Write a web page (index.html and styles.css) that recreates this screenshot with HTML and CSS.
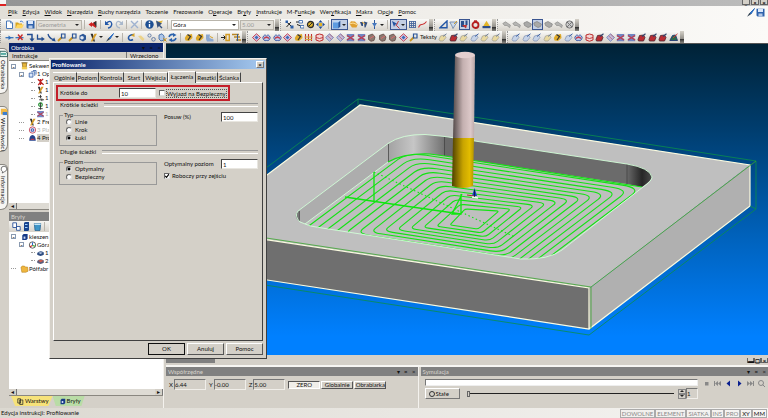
FILE: index.html
```html
<!DOCTYPE html>
<html lang="pl">
<head>
    <meta charset="UTF-8">
    <meta name="viewport" content="width=device-width, initial-scale=1.0">
    <title>Profilowanie</title>
    <link rel="stylesheet" href="styles.css">
</head>
<body>
    <!-- icon sprite -->
    <svg class="sprite" aria-hidden="true">
        <symbol id="i-new" viewBox="0 0 9 9"><path d="M1.5 1H5.5L7.5 3V8.5H1.5Z" fill="#fff" stroke="#4a78b8"/><path d="M5.5 1V3H7.5" fill="none" stroke="#4a78b8" stroke-width=".7"/></symbol>
        <symbol id="i-open" viewBox="0 0 9 9"><path d="M.5 2.5H3L4 3.5H7V8H.5Z" fill="#d9a520"/><path d="M2.2 4.5H9L7 8.2H.5Z" fill="#ffd65c"/><path d="M5 1.5Q7 0 8 2.5" fill="none" stroke="#26c" stroke-width=".8"/></symbol>
        <symbol id="i-save" viewBox="0 0 9 9"><path d="M.5.8H8.5V8.5H1.5L.5 7.5Z" fill="#2e62ac"/><path d="M2 1H7V4H2Z" fill="#dce8fa"/><path d="M2.5 5.5H6.5V8.5H2.5Z" fill="#b4c8e6"/></symbol>
        <symbol id="i-pick" viewBox="0 0 9 9"><path d="M.5 4.5L4 2V3.5L8 1V8L4 5.5V7Z" fill="#c22"/><path d="M5.5 2.5L8.5 1V7.5Z" fill="#333"/></symbol>
        <symbol id="i-undo" viewBox="0 0 9 9"><path d="M2 3.5Q7-1 7.8 4Q7.5 7.5 4 8" fill="none" stroke="#2458a8" stroke-width="1.4"/><path d="M1 .8V5H5.2Z" fill="#2458a8"/></symbol>
        <symbol id="i-redo" viewBox="0 0 9 9"><path d="M7 3.5Q2-1 1.2 4Q1.5 7.5 5 8" fill="none" stroke="#a9b8cc" stroke-width="1.3"/><path d="M8 .8V5H3.8Z" fill="#a9b8cc"/></symbol>
        <symbol id="i-del" viewBox="0 0 9 9"><path d="M1 1L8 8M8 1L1 8" stroke="#9fb2d0" stroke-width="1.4"/></symbol>
        <symbol id="i-info" viewBox="0 0 9 9"><circle cx="4.5" cy="4.5" r="4.2" fill="#1d4f93"/><path d="M4.5 4V7.3M4.5 1.6V3" stroke="#fff" stroke-width="1.4"/></symbol>
        <symbol id="i-help" viewBox="0 0 9 9"><path d="M1 2L8 .5L5 5L4 4Z" fill="#e2b83a"/><path d="M1 .5L2.5 8L4 6L6.5 8.5L7.5 7.5L5 5L7 3.5Z" fill="#36527e"/></symbol>
        <symbol id="i-nodes" viewBox="0 0 9 9"><path d="M1 1.5L4 4L7.5 7.5M1.5 7L6 2" stroke="#222" stroke-width="1"/><path d="M.5.5H3V3H.5ZM5.5 5.5H8.5V8.5H5.5Z" fill="#2d5fa8"/></symbol>
        <symbol id="i-steps" viewBox="0 0 9 9"><path d="M1 2H5M2 4.5L6 6" stroke="#222"/><path d="M4 .5H7.5V3H4ZM5.5 5.5H9V8H5.5Z" fill="#fff" stroke="#2d5fa8" stroke-width=".8"/></symbol>
        <symbol id="i-turn" viewBox="0 0 9 9"><circle cx="4.5" cy="4.5" r="3" fill="#e2b52b" stroke="#2b2b2b" stroke-width="1.3"/><path d="M3 6L6.5 2.5" stroke="#2b2b2b"/></symbol>
        <symbol id="i-move" viewBox="0 0 9 9"><path d="M4.5 0L6.5 2.5H2.5ZM4.5 9L2.5 6.5H6.5ZM0 4.5L2.5 2.5V6.5ZM9 4.5L6.5 6.5V2.5Z" fill="#234d92"/><path d="M3 3H6V6H3Z" fill="#e3b326"/></symbol>
        <symbol id="i-cube" viewBox="0 0 9 9"><path d="M1 2.5L3 .7H8.3L6.3 2.5Z" fill="#b8d6f8"/><path d="M1 2.5H6.3V8.5H1Z" fill="#5d9be0"/><path d="M6.3 2.5L8.3.7V6.5L6.3 8.5Z" fill="#1c4f9a"/></symbol>
        <symbol id="i-disc" viewBox="0 0 9 9"><path d="M.5 4L2 1.2L6 1.5L8.7 4.5L7.5 7.5L3 7.5Z" fill="#e0a030"/><path d="M1 3.8L4 3L8 4.5" stroke="#ffe09a" fill="none"/></symbol>
        <symbol id="i-pair" viewBox="0 0 9 9"><path d="M1 2H4V6H2.5ZM5 1.5L8.5 2.5L6.5 7.5H5.5Z" fill="#37507e"/><path d="M3 2L6 4" stroke="#d29a2c"/></symbol>
        <symbol id="i-pin" viewBox="0 0 9 9"><path d="M4.5 0V9" stroke="#2e5a9d"/><path d="M2 3H7L4.5 7Z" fill="#4577bd"/></symbol>
        <symbol id="i-snap" viewBox="0 0 9 9"><path d="M1 1L6.5 4L4 4.8L3 7Z" fill="#2354a0"/><path d="M5.5 5.5L8.5 8.5M7.5 1L5 6" stroke="#c23b3b"/></symbol>
        <symbol id="i-grid" viewBox="0 0 9 9"><path d="M1.5 1V8M3.5 1V8M5.5 1V8M7.5 1V8M1 1.5H8M1 3.5H8M1 5.5H8M1 7.5H8" stroke="#4a6a9e" stroke-width=".9"/></symbol>
        <symbol id="i-curve" viewBox="0 0 9 9"><path d="M.5 7.5C3 1 4 8 8.5 1.5" fill="none" stroke="#c33" stroke-width="1.1"/></symbol>
        <symbol id="i-angle" viewBox="0 0 9 9"><path d="M1 7.8H8V1Z" fill="none" stroke="#2357a6" stroke-width="1.4"/></symbol>
        <symbol id="i-cup" viewBox="0 0 9 9"><path d="M.8 2H8.2L5.5 6L4 8.5L3 6Z" fill="#cfdcec" stroke="#6780a5" stroke-width=".8"/><path d="M5 4L8 1" stroke="#d0a12b"/></symbol>
        <symbol id="i-mill" viewBox="0 0 9 9"><path d="M1 1H4V7H1ZM5.5.5H7.5V5H5.5Z" fill="#2a4f8d"/><path d="M2 5H7L6 8.5Z" fill="#bd3131"/></symbol>
        <symbol id="i-ring" viewBox="0 0 9 9"><circle cx="4.5" cy="5" r="3" fill="none" stroke="#b51f1f" stroke-width="1.8"/><path d="M3 .3H6V2H3Z" fill="#b51f1f"/></symbol>
        <symbol id="i-bell" viewBox="0 0 9 9"><path d="M1 6.5L4.5.8L8 6.5Z" fill="#e3b526"/><path d="M.5 6H8.5V8.2H.5Z" fill="#2d4d88"/></symbol>
        <symbol id="i-gray" viewBox="0 0 9 9"><path d="M.8 3L4 1.5L8.4 4L7.5 6.5L5 7.5L1.5 5.5Z" fill="#a9a9a7" stroke="#838381" stroke-width=".7"/></symbol>
        <symbol id="i-grayarm" viewBox="0 0 9 9"><path d="M.8 3.5L3.5 1.8L8.4 5.2L7.6 7.6L5 5.5L2.5 5.5Z" fill="#b5b5b3" stroke="#858583" stroke-width=".6"/></symbol>
        <symbol id="i-grayx" viewBox="0 0 9 9"><circle cx="4.5" cy="4.5" r="3.6" fill="#ccc" stroke="#777"/><path d="M2 2L7 7M7 2L2 7" stroke="#777"/></symbol>

        <symbol id="i-line" viewBox="0 0 9 9"><path d="M.5 4.7H8.5" stroke="#2a6ab8" stroke-width="1.2"/><path d="M3.5 2.5L6.5 4.7L3.5 7Z" fill="#2a6ab8"/></symbol>
        <symbol id="i-linex" viewBox="0 0 9 9"><path d="M.5 4.7H8.5" stroke="#2a6ab8" stroke-width="1.2"/><path d="M3 1.5L7.5 7M7.5 1.5L3 7" stroke="#c62828" stroke-width="1.3"/></symbol>
        <symbol id="i-down" viewBox="0 0 9 9"><path d="M1 1.5H6V6" fill="none" stroke="#234e92" stroke-width="1.5"/><path d="M3.5 5.5H8.5L6 8.8Z" fill="#234e92"/></symbol>
        <symbol id="i-right" viewBox="0 0 9 9"><path d="M1.5 1.5V6H6" fill="none" stroke="#234e92" stroke-width="1.3"/><path d="M5.5 3.8V8.2L8.8 6Z" fill="#234e92"/></symbol>
        <symbol id="i-diag" viewBox="0 0 9 9"><path d="M1 1Q2 5 6 6.5" fill="none" stroke="#234e92" stroke-width="1.3"/><path d="M8.6 8.4L4.6 7.6L7.3 4.6Z" fill="#234e92"/></symbol>
        <symbol id="i-key" viewBox="0 0 9 9"><path d="M1 8L5 4" stroke="#c99522" stroke-width="1.8"/><path d="M4.5 1H8V5H4.5Z" fill="none" stroke="#2a5598" stroke-width="1.2"/></symbol>
        <symbol id="i-gear" viewBox="0 0 9 9"><path d="M1.5 2.5L5 .8L8 2.5V6.5L5 8.5L1.5 6.5Z" fill="#2d5797"/><circle cx="4" cy="4.8" r="1.8" fill="#dfe7f2"/></symbol>
        <symbol id="i-drill" viewBox="0 0 9 9"><path d="M1.5.8H3.8L6 8.5H4.5Z" fill="#303030"/><path d="M5.5.8H8L3.5 8.5H1.8Z" fill="#d69d28"/></symbol>
        <symbol id="i-brush" viewBox="0 0 9 9"><path d="M8.5.5L4 5L5 6Z" fill="#2c6dc0" stroke="#2c6dc0"/><path d="M1 8.8L3.5 4.8L5 6.2Z" fill="#345"/></symbol>
        <symbol id="i-hook" viewBox="0 0 9 9"><path d="M7.5 1.5Q2 2 2.5 5.5Q3.5 8.5 7 6.5" fill="none" stroke="#2458a5" stroke-width="1.6"/><path d="M5 2.5L8.5 0V4Z" fill="#d6a32a"/></symbol>
        <symbol id="i-soft" viewBox="0 0 9 9"><path d="M1 3L4 2.5L7.5 6L6 8L4 6.5Z" fill="#ecd389"/></symbol>
        <symbol id="i-dots" viewBox="0 0 9 9"><circle cx="2.5" cy="2.5" r="1.6" fill="none" stroke="#667fa8"/><circle cx="6.5" cy="6.3" r="1.8" fill="none" stroke="#667fa8"/></symbol>
        <symbol id="i-hex" viewBox="0 0 9 9"><path d="M1 2L4 .8L6 3V7L3 8L1 6Z" fill="#aec6e8" stroke="#36639f" stroke-width=".8"/><path d="M5 5L8.5 8.5M8.5 5L5.5 8.5" stroke="#c99420"/></symbol>
        <symbol id="i-swap" viewBox="0 0 9 9"><path d="M1 4Q2 .8 5.5 1.5M8 5Q7 8.2 3.5 7.5" fill="none" stroke="#2b63ad" stroke-width="1.5"/><path d="M5 0L8.5 2L5 4ZM4 5L.5 7L4 9Z" fill="#2b63ad"/></symbol>
        <symbol id="i-gold" viewBox="0 0 9 9"><path d="M.8 5L2.5 2L8 1L8.5 5L5 8L1.5 7.5Z" fill="#dfaa29"/><path d="M3.5 1.5L6.5 3.5L4 7" fill="none" stroke="#333" stroke-width="1.2"/></symbol>
        <symbol id="i-part" viewBox="0 0 9 9"><path d="M1 1.5H5L4.5 5L8.5 6.5V8.5H2L1 6Z" fill="#8ba7ce"/><path d="M5 3.5L8 5" stroke="#d4a12c"/></symbol>
        <symbol id="i-in" viewBox="0 0 9 9"><path d="M0 4.5H4M2.5 2.5L4.5 4.5L2.5 6.5" fill="none" stroke="#222"/><path d="M5 1.5H8.3V7.5H5Z" fill="none" stroke="#d39c25" stroke-width="1.4"/></symbol>
        <symbol id="i-list" viewBox="0 0 9 9"><path d="M0 1.5H7M2 4H8M4 7H9" stroke="#b98724" stroke-width="1.6"/><path d="M5.5 1V8" stroke="#345c98"/></symbol>
        <symbol id="i-coil" viewBox="0 0 9 9"><path d="M.5 4.5L4.5.8L8.5 4.5L4.5 8.2Z" fill="#d8d4f0" stroke="#c23a4c" stroke-width="1"/><path d="M2.5 4.5L4.5 2.6L6.5 4.5L4.5 6.4Z" fill="#4168b4"/></symbol>
        <symbol id="i-weave" viewBox="0 0 9 9"><path d="M.8 1H8.2V3.5L6 4.5L8.2 6V8.2H.8V6L3 4.5L.8 3.5Z" fill="#7186c2"/><path d="M1 2.5L8 7M8 2.5L1 7" stroke="#c23a4c" stroke-width="1.1"/></symbol>
        <symbol id="i-wave" viewBox="0 0 9 9"><path d="M.8 4.5Q2.5.5 4.5 3Q6.5.5 8.2 4.5Q7.5 8.3 4.5 7.5Q1.5 8.3.8 4.5Z" fill="#bcc8e8" stroke="#3453a0" stroke-width=".9"/><path d="M2 5.5Q4.5 3 7 5.5" fill="none" stroke="#c23a4c" stroke-width="1.2"/></symbol>
        <symbol id="i-pot" viewBox="0 0 9 9"><path d="M1 2Q4.5 0 8 2V7Q4.5 9.5 1 7Z" fill="#f1d5d5" stroke="#bd2e2e"/><path d="M1 4.5Q4.5 6.5 8 4.5" fill="none" stroke="#bd2e2e" stroke-width=".9"/></symbol>
        <symbol id="i-peg" viewBox="0 0 9 9"><path d="M1.5 1V8M4.5 1V8M7.5 1V8" stroke="#c23333" stroke-width="1.1"/><path d="M.5 4H8.5M1 6.5H8" stroke="#d7a53a" stroke-width="1"/></symbol>
        <symbol id="i-tile" viewBox="0 0 9 9"><path d="M4.5.8L8.5 4.5L4.5 8.3L.6 4.5Z" fill="#c2bcda" stroke="#667fbd" stroke-width=".8"/><path d="M2.5 2.7L6.5 6.5M4.5 1L8 4.5" stroke="#bf5f70" stroke-width=".7"/></symbol>
        <symbol id="i-knob" viewBox="0 0 9 9"><path d="M1.5 2.5L5.5 1L8 4L7 7.5L4 8.3L1.5 6.5Z" fill="#8c7a72" stroke="#563f3b" stroke-width=".7"/><path d="M3 5.5L7 3" stroke="#d96b6b"/></symbol>
        <symbol id="i-slab" viewBox="0 0 9 9"><path d="M1 6.5L2.5 3L6.5 2L8 4.5L5 8H2Z" fill="#c6d3e8" stroke="#8091b2" stroke-width=".7"/><path d="M5 3.5L8.5.8" stroke="#3b60a4" stroke-width="1"/></symbol>
        <symbol id="i-slaby" viewBox="0 0 9 9"><path d="M1 6.5L2.5 3L6.5 2L8 4.5L5 8H2Z" fill="#e9d9a0" stroke="#a29f93" stroke-width=".7"/><path d="M5 3.5L8.5.8" stroke="#6f7f98" stroke-width="1"/></symbol>
        <symbol id="i-slabr" viewBox="0 0 9 9"><path d="M1 6.5L2.5 2.5L6.5 2L8 4.5L6.5 8H1.5Z" fill="#bb2c33" stroke="#4c2730" stroke-width=".8"/><path d="M5 3.5L8.5.8" stroke="#30456e" stroke-width="1.1"/></symbol>
        <symbol id="i-slabg" viewBox="0 0 9 9"><path d="M.8 7.5L3.5 2.5L6.5 2L8.5 7.5Z" fill="#2b6a4a" stroke="#223a74" stroke-width=".9"/><path d="M4 5L8.5.8" stroke="#c33" stroke-width="1"/></symbol>

        <symbol id="i-scroll" viewBox="0 0 9 9"><path d="M1 .8H8M2 1H7L6.5 6H2.5Z" fill="#e6b63a" stroke="#7a5a14" stroke-width=".7"/><path d="M1.5 5.5H7.5V8.3H1.5Z" fill="#f2cc52"/></symbol>
        <symbol id="i-ops" viewBox="0 0 9 9"><path d="M.8 3.5H5V8H.8Z" fill="#dce8fa" stroke="#2e5aa6" stroke-width=".9"/><path d="M3 2H7V6.5" fill="none" stroke="#2e5aa6" stroke-width=".9"/><path d="M5 .6H8.5V5" fill="none" stroke="#2e5aa6" stroke-width=".9"/></symbol>
        <symbol id="i-redtool" viewBox="0 0 9 9"><path d="M1.5 1.5L4.5 4L7.5 1M2 8L4.5 4.5L8 7.5M4.5 1V8" stroke="#bb1f1f" stroke-width="1.4" fill="none"/></symbol>
        <symbol id="i-clamp" viewBox="0 0 9 9"><path d="M2 3H6M4.5 1V5M6 5V8M3 6.5H8.5" stroke="#333" stroke-width="1"/></symbol>
        <symbol id="i-spin" viewBox="0 0 9 9"><circle cx="4.5" cy="3" r="2" fill="none" stroke="#1e8a2c" stroke-width="1.3"/><path d="M4.5 1V8.5M2 7.5H7" stroke="#333"/></symbol>
        <symbol id="i-target" viewBox="0 0 9 9"><circle cx="4.5" cy="4.5" r="3.6" fill="#f4e9f2" stroke="#c6485e"/><circle cx="4.5" cy="4.5" r="1.5" fill="none" stroke="#3d5fb4" stroke-width="1.2"/></symbol>
        <symbol id="i-prof" viewBox="0 0 9 9"><path d="M.8 7.5Q1 1.5 4.5 1.2Q8 1.5 8.2 7.5Z" fill="#25428c"/><path d="M2.5 6H6.5" stroke="#c23a4c" stroke-width="1.3"/></symbol>
        <symbol id="i-solid" viewBox="0 0 9 9"><path d="M2 2.5L3.5 1H8V6.5L6.5 8H2Z" fill="#173a88"/><path d="M3.5 4H5.5V6.5H3.5Z" fill="#cdd9f2"/></symbol>
        <symbol id="i-plane" viewBox="0 0 9 9"><circle cx="4.5" cy="4.5" r="3.6" fill="#fff" stroke="#555"/><path d="M4.5 5V1.5" stroke="#26c" stroke-width="1.2"/><path d="M4.5 5L1.5 6.5" stroke="#c22" stroke-width="1.4"/><path d="M4.5 5L7.5 6" stroke="#2a2" stroke-width="1.2"/></symbol>
        <symbol id="i-body" viewBox="0 0 9 9"><path d="M.8 4.5Q4 1 8.2 4V6.5Q4.5 9 .8 6.5Z" fill="#2e4c80"/><path d="M2 4.3Q4.5 3 7 4.3L4.5 5.5Z" fill="#c0d0e8"/></symbol>
        <symbol id="i-bodyr" viewBox="0 0 9 9"><path d="M.8 4.5Q4 1 8.2 4V6.5Q4.5 9 .8 6.5Z" fill="#5a5e7c"/><path d="M2 4.3Q4.5 2.4 8 4.3L4.5 5.8Z" fill="#d45a4a"/></symbol>
        <symbol id="i-folder" viewBox="0 0 9 9"><path d="M.5 2.5L2 1.2H4.5L5.5 2.3H8L8.5 7L6 8.2H1.5Z" fill="#efb63e" stroke="#b27c1c" stroke-width=".6"/></symbol>
        <symbol id="i-copy" viewBox="0 0 9 9"><path d="M.8.8H4.5V5.5H.8ZM4.5 4.5H8.2V8.3H4.5Z" fill="#fff" stroke="#2e549a" stroke-width=".9"/></symbol>
        <symbol id="i-cab" viewBox="0 0 9 9"><path d="M2 .8L3.5 0H7V8.2L6 9H2Z" fill="#16428e"/><path d="M3 2.5H5.5M3 5.5H5.5" stroke="#9fd0ff"/></symbol>
        <symbol id="i-bin" viewBox="0 0 9 9"><path d="M1.3 1.5H7.7L7 8.5H2Z" fill="#3f96c8" stroke="#205c8c" stroke-width=".7"/><path d="M1.3 1.5H7.7V3H1.3Z" fill="#c4e6f8"/></symbol>
        <symbol id="i-layers" viewBox="0 0 9 9"><path d="M1 1H4.5V6.5H1ZM3.5 2.5H7.5V8.3H3.5Z" fill="#e8d87a" stroke="#222" stroke-width=".9"/></symbol>
        <symbol id="i-bubble" viewBox="0 0 9 9"><path d="M4.5.8A3.2 3.2 0 0 1 7.7 4Q7.7 6 5 7L2.5 8.5L3 6.8Q1.3 6 1.3 4A3.2 3.2 0 0 1 4.5.8Z" fill="#fff" stroke="#444" stroke-width=".8"/></symbol>
        <symbol id="i-machine" viewBox="0 0 9 9"><path d="M0 2H6L8.5 4V8H0Z" fill="#e3f4ee" stroke="#1f5652"/><path d="M1 5H7" stroke="#2a948a" stroke-width="1.6"/></symbol>
        <symbol id="i-card" viewBox="0 0 9 9"><path d="M1 1.5H7L8.5 4V8H1Z" fill="#f2b944"/><path d="M3 5H8V8.5H3Z" fill="#3b7ed0"/></symbol>
    </svg>

    <header class="titlebar">
        <span class="logo"></span>
        <div class="winbtns">
            <button aria-label="Minimalizuj">_</button>
            <button aria-label="Przywróć">▫</button>
            <button aria-label="Zamknij">×</button>
        </div>
    </header>

    <nav class="menubar">
        <a href="#"><u>P</u>lik</a>
        <a href="#"><u>E</u>dycja</a>
        <a href="#"><u>W</u>idok</a>
        <a href="#"><u>N</u>arzędzia</a>
        <a href="#"><u>R</u>uchy narzędzia</a>
        <a href="#">Toczenie</a>
        <a href="#">Frezowanie</a>
        <a href="#">O<u>p</u>eracje</a>
        <a href="#">Br<u>y</u>ły</a>
        <a href="#"><u>I</u>nstrukcje</a>
        <a href="#">M-F<u>u</u>nkcje</a>
        <a href="#">Wer<u>y</u>fikacja</a>
        <a href="#"><u>M</u>akra</a>
        <a href="#">Op<u>c</u>je</a>
        <a href="#"><u>P</u>omoc</a>
        <span class="menu-right tools" data-icons="brush save"></span>
    </nav>

    <div class="toolbar-row">
        <div class="toolbar">
            <span class="tools" data-icons="new open save"></span>
            <select class="combo combo-geo" aria-label="Geometria" disabled><option>Geometria</option></select>
            <span class="tools" data-icons="| pick | undo redo | del | info help |"></span>
            <select class="combo combo-plane" aria-label="Płaszczyzna"><option>Góra</option></select>
            <select class="combo combo-z" aria-label="Poziom" disabled><option>5.00</option></select>
        </div>
        <div class="toolbar">
            <span class="tools" data-icons="nodes steps turn move | cube*v disc pair pin v | snap*v grid curve"></span>
        </div>
        <div class="toolbar">
            <span class="tools" data-icons="angle cup mill* ring bell"></span>
        </div>
        <div class="toolbar">
            <span class="tools" data-icons="grayarm grayarm gray gray* gray grayarm grayx"></span>
        </div>
    </div>

    <div class="toolbar-row">
        <div class="toolbar">
            <span class="tools" data-icons="line linex down right diag key key gear drill v brush v | hook soft dots hex swap | gold gold part | in list"></span>
        </div>
        <div class="toolbar">
            <span class="tools" data-icons="coil wave wave coil gold peg pot tile tile weave weave knob knob knob coil key"></span>
            <button class="textbtn">Teksty</button>
            <span class="tools" data-icons="slaby slabr slaby slab slaby slaby"></span>
        </div>
        <div class="toolbar">
            <span class="tools" data-icons="slab slab slab slaby gold slab wave pot slabr tile weave weave slabr slabr slabr slabg"></span>
        </div>
    </div>

    <main class="work">
        <aside class="rail">
            <button><svg><use href="#i-machine"/></svg><span>Obrabiarka</span></button>
            <button><svg><use href="#i-card"/></svg><span>Właściwości</span></button>
            <button><svg><use href="#i-bubble"/></svg><span>Informacje</span></button>
        </aside>

        <section class="side">
            <div class="pane-head active"><span>Obróbka</span><span class="marks">▾ ¤ ×</span></div>
            <div class="cols"><span>Instrukcje</span><span>Wrzeciono</span></div>
            <ul class="tree tree-ops">
                <li><b class="box">-</b><svg><use href="#i-scroll"/></svg>Sekwen</li>
                <li class="l1"><b class="box">-</b><svg><use href="#i-ops"/></svg>1 Op</li>
                <li class="l2"><svg><use href="#i-redtool"/></svg>1</li>
                <li class="l2"><svg><use href="#i-drill"/></svg>1</li>
                <li class="l2"><svg><use href="#i-clamp"/></svg>1</li>
                <li class="l2"><svg><use href="#i-spin"/></svg>1</li>
                <li class="l2 off"><svg><use href="#i-weave"/></svg>1</li>
                <li class="l1"><i class="stub"></i><svg><use href="#i-drill"/></svg>2 Fre</li>
                <li class="l1 off"><i class="stub"></i><svg><use href="#i-target"/></svg>3 Pla</li>
                <li class="l1"><i class="stub"></i><svg><use href="#i-prof"/></svg><span class="sel">4 Pro</span></li>
            </ul>
            <div class="hscroll"><button aria-label="W lewo">◂</button><button aria-label="W prawo">▸</button></div>
            <div class="pane-head gap"><span>Bryły</span></div>
            <div class="mini tools" data-icons="copy cab bin |"></div>
            <ul class="tree tree-solids">
                <li><b class="box">-</b><svg><use href="#i-solid"/></svg>kieszen</li>
                <li class="l1"><b class="box">-</b><svg><use href="#i-plane"/></svg>Góra</li>
                <li class="l2"><svg><use href="#i-body"/></svg>1</li>
                <li class="l2"><svg><use href="#i-bodyr"/></svg>2</li>
                <li><i class="stub"></i><svg><use href="#i-folder"/></svg>Półfabr</li>
            </ul>
            <div class="hscroll"><button aria-label="W lewo">◂</button><button aria-label="W prawo">▸</button></div>
            <div class="side-tabs">
                <button class="yellow"><svg><use href="#i-layers"/></svg>Warstwy</button>
                <button class="green"><svg><use href="#i-solid"/></svg>Bryły</button>
            </div>
        </section>

        <section class="stage">
            <div class="view">
                <svg viewBox="166 44 602 311" preserveAspectRatio="xMinYMin slice">
                    <defs>
                        <linearGradient id="bend"><stop offset="0" stop-color="#a2a2a2"/><stop offset=".45" stop-color="#c6c6c6"/><stop offset="1" stop-color="#707070"/></linearGradient>
                        <linearGradient id="bendR"><stop offset="0" stop-color="#6a6a6a"/><stop offset=".6" stop-color="#262626"/><stop offset="1" stop-color="#4a4a4a"/></linearGradient>
                        <linearGradient id="shank"><stop offset="0" stop-color="#544a4a"/><stop offset=".45" stop-color="#c4b0b0"/><stop offset=".8" stop-color="#dcc8c8"/><stop offset="1" stop-color="#b8a6a6"/></linearGradient>
                        <linearGradient id="flute"><stop offset="0" stop-color="#4e4000"/><stop offset=".5" stop-color="#c8a400"/><stop offset=".8" stop-color="#e2bc00"/><stop offset="1" stop-color="#b49400"/></linearGradient>
                        <clipPath id="floor"><path d="M305 224L388 162Q404 153 430 154L445 156L627 184L643 187L562 250Q549 260 521 259L322 228Q311 227 305 224Z"/></clipPath>
                    </defs>
                    <!-- block -->
                    <path d="M195 229L360 105L750 165L590 288Z" fill="#bfbfbf"/>
                    <path d="M195 229L590 288V329L195 269Z" fill="#6f6f6f"/>
                    <path d="M590 288L750 165V206L589 329Z" fill="#b0b0b0"/>
                    <path d="M195 229L360 105L750 165V206L589 329L195 269M195 229L589 288V329" fill="none" stroke="#fcfce0" stroke-width="1.2"/>
                    <path d="M266 168L358 99L756 161V209L589 335L200 275M358 99V105M750 206L756 209" fill="none" stroke="#0a8f4a" stroke-width=".8"/>
                    <path d="M200 228L591 287L756 161M591 287V329" fill="none" stroke="#3aa52e" stroke-width=".8"/>
                    <!-- pocket walls -->
                    <path d="M298 211L388 143.5V162L305 224Q295 220 296 214Z" fill="#adadad"/>
                    <path d="M296 214L299 210V221Q295 218 296 214Z" fill="#777"/>
                    <path d="M388 143.5Q402 134 425 134.5L445 136.5V156L430 154Q404 153 388 162Z" fill="url(#bend)"/>
                    <path d="M445 136.5L627 164V184L445 156Z" fill="#6b6b6b"/>
                    <path d="M627 164Q650 168 652 177Q652 180 642 187L627 184Z" fill="url(#bendR)"/>
                    <path d="M388.5 144V162M444.5 137V156M627 164V184M299.5 211V221" stroke="#3c3c3c" stroke-width=".7"/>
                    <!-- tool passes, filled by script.js -->
                    <g clip-path="url(#floor)"><path id="passes" fill="none" stroke="#14e214" stroke-width="1.1"/></g>
                    <path d="M388 162Q404 153 430 154L445 156L642 187" fill="none" stroke="#14e214" stroke-width="1.2"/>
                    <path d="M627 164L445 136.5L425 134.5Q402 134 388 143.5L298 211Q294 216 300 222Q310 227 322 228L521 259Q549 260 562 250L643 187Q652 181 652 177Q650 168 627 164ZM305 224L388 162" fill="none" stroke="#d2ffd8" stroke-width=".9"/>
                    <path d="M374 202V172M345 197L405 206L461 214M461 194V214H452L462 194" fill="none" stroke="#0fe60f" stroke-width="1.3"/>
                    <path d="M374 172L515 237" stroke="#0fe60f" stroke-width="1.1" stroke-dasharray="1.5 2.5"/>
                    <!-- cutter -->
                    <path d="M455 55H475L474 139H453Z" fill="url(#shank)"/>
                    <path d="M453 138H474L473 186Q463 190 452 186Z" fill="url(#flute)"/>
                    <ellipse cx="465" cy="55" rx="10" ry="3.2" fill="#e3cfcf"/>
                    <path d="M474.5 188L477 196H472Z" fill="#1238c8"/>
                    <path d="M467 195L474 196" stroke="#a33"/>
                    <path d="M472 197L478 198" stroke="#e9fff0" stroke-width="1.5"/>
                    <path d="M474.5 190V197" stroke="#111" stroke-width=".7"/>
                </svg>
            </div>
            <div class="strip"><span class="strip-tab"></span><div class="winbtns"><button aria-label="Minimalizuj">▬</button><button aria-label="Maksymalizuj">◻</button><button aria-label="Zamknij">×</button></div></div>
            <div class="docks">
                <div class="dock dock-coords">
                    <div class="pane-head"><span>Współrzędne</span><span class="marks">▾ ¤ ×</span></div>
                    <div class="coords">
                        <label>X<input type="text" value="6.44"></label>
                        <label>Y<input type="text" value="-0.00"></label>
                        <label>Z<input type="text" value="5.00"></label>
                        <div class="coord-btns">
                            <button class="pressed">ZERO</button>
                            <button>Globalnie</button>
                            <button>Obrabiarka</button>
                        </div>
                    </div>
                </div>
                <div class="dock dock-sim">
                    <div class="pane-head"><span>Symulacja</span><span class="marks">▾ ¤ ×</span></div>
                    <div class="sim">
                        <div class="sim-main">
                            <div class="progress"></div>
                            <div class="sim-speed">
                                <button class="stale"><i></i>Stałe</button>
                                <input type="range" min="0" max="100" value="0" aria-label="Prędkość">
                                <span class="spin"><button aria-label="Więcej"><i class="up"></i></button><button aria-label="Mniej"><i class="drop"></i></button></span>
                                <input type="text" class="num" value="1" aria-label="Krok">
                            </div>
                        </div>
                        <div class="transport">
                            <button class="dim" aria-label="Stop"><svg viewBox="0 0 9 9"><path d="M3 3H6.5V6.5H3Z"/></svg></button>
                            <button class="dim" aria-label="Początek"><svg viewBox="0 0 9 9"><path d="M1 2H2V7H1ZM5 2V7L2 4.5ZM8 2V7L5 4.5Z"/></svg></button>
                            <button aria-label="Wstecz"><svg viewBox="0 0 9 9"><path d="M6 1.5V7.5L2.5 4.5Z"/></svg></button>
                            <button aria-label="Odtwórz"><svg viewBox="0 0 9 9"><path d="M3 1.5V7.5L6.5 4.5Z"/></svg></button>
                            <button class="dim" aria-label="Koniec"><svg viewBox="0 0 9 9"><path d="M8 2H7V7H8ZM4 2V7L7 4.5ZM1 2V7L4 4.5Z"/></svg></button>
                            <button class="dim" aria-label="Lupa"><svg viewBox="0 0 9 9"><circle cx="4" cy="4" r="2.5" fill="none" stroke="#888"/><path d="M5.5 5.5L8 8" stroke="#888"/></svg></button>
                        </div>
                    </div>
                </div>
            </div>
        </section>
    </main>

    <footer class="status">
        <span>Edycja instrukcji: Profilowanie</span>
        <div class="flags">
            <span>DOWOLNE</span><span>ELEMENT</span><span>SIATKA</span><span>INS</span><span>PRO</span><span class="on">XY</span><span class="on">MM</span>
        </div>
    </footer>

    <form class="dialog" role="dialog" aria-label="Profilowanie">
        <div class="dlg-title"><span>Profilowanie</span><button type="button" aria-label="Zamknij">×</button></div>
        <div class="tabs">
            <button type="button">Ogólnie</button>
            <button type="button">Poziom</button>
            <button type="button">Kontrola</button>
            <button type="button">Start</button>
            <button type="button">Wejścia</button>
            <button type="button" class="current">Łączenia</button>
            <button type="button">Resztki</button>
            <button type="button">Ścianka</button>
        </div>
        <div class="page">
            <div class="marked">
                <label for="short">Krótkie do</label>
                <input type="text" id="short" value="10">
                <label class="check"><input type="checkbox"><span class="focus">Wyjazd na Bezpieczny</span></label>
            </div>
            <div class="heading">Krótkie ścieżki</div>
            <div class="row">
                <fieldset>
                    <legend>Typ</legend>
                    <label><input type="radio" name="typ">Linie</label>
                    <label><input type="radio" name="typ">Krok</label>
                    <label><input type="radio" name="typ" checked>Łuki</label>
                </fieldset>
                <div class="opts">
                    <div class="field"><label for="feed">Posuw (%)</label><input type="text" id="feed" value="100"></div>
                </div>
            </div>
            <div class="heading">Długie ścieżki</div>
            <div class="row">
                <fieldset>
                    <legend>Poziom</legend>
                    <label><input type="radio" name="poziom" checked>Optymalny</label>
                    <label><input type="radio" name="poziom">Bezpieczny</label>
                </fieldset>
                <div class="opts">
                    <div class="field"><label for="level">Optymalny poziom</label><input type="text" id="level" value="1"></div>
                    <label class="check"><input type="checkbox" checked>Roboczy przy zejściu</label>
                </div>
            </div>
        </div>
        <div class="dlg-btns">
            <button type="button" class="default">OK</button>
            <button type="button">Anuluj</button>
            <button type="button">Pomoc</button>
        </div>
    </form>

    <script src="script.js"></script>
</body>
</html>
```

FILE: script.js
```js
// toolbar buttons: "|" separator, "v" drop-down arrow, "*" pressed
document.querySelectorAll('[data-icons]').forEach(function(bar) {
    bar.dataset.icons.split(' ').forEach(function(item) {
        if (item === '|') {
            bar.insertAdjacentHTML('beforeend', '<i class="sep"></i>');
            return;
        }
        if (item === 'v') {
            bar.insertAdjacentHTML('beforeend', '<i class="drop"></i>');
            return;
        }
        const parts = item.split('*');
        const on = item.includes('*') ? ' on' : '';
        const drop = parts[1] === 'v' ? '<i class="drop"></i>' : '';
        bar.insertAdjacentHTML('beforeend',
            `<button class="tool${on}" aria-label="${parts[0]}"><svg><use href="#i-${parts[0]}"/></svg>${drop}</button>`);
    });
});

// pocket passes: loops between the core and the pocket edge,
// the outer ones run past the front wall and are clipped
const outer = [[405, 150], [647, 187], [526, 278], [284, 240]];
const inner = [[465, 209], [499, 211], [478, 229], [450, 225]];
const count = 13;

function mix(a, b, t) {
    return [a[0] + (b[0] - a[0]) * t, a[1] + (b[1] - a[1]) * t];
}

let d = '';
for (let i = 0; i < count; i++) {
    const quad = inner.map((p, k) => mix(p, outer[k], i / (count - 0.5)));
    const cut = 0.08;
    quad.forEach(function(p, k) {
        const prev = quad[(k + 3) % 4];
        const next = quad[(k + 1) % 4];
        const a = mix(p, prev, cut);
        const b = mix(p, next, cut);
        d += `${k === 0 ? 'M' : 'L'}${a}Q${p} ${b}`;
    });
    d += 'Z';
}
document.getElementById('passes').setAttribute('d', d);
```

FILE: styles.css
```css
* {
    box-sizing: border-box;
}
body {
    margin: 0;
    height: 100vh;
    display: flex;
    flex-direction: column;
    overflow: hidden;
    background: #d4d0c8;
    color: #111;
    font-family: Lato, "Liberation Sans", sans-serif;
    font-size: 6px;
    line-height: 8px;
}
button, input, select {
    font: inherit;
    color: inherit;
    margin: 0;
    padding: 0;
    border: 0;
    border-radius: 0;
    background: none;
    white-space: nowrap;
}
a {
    color: inherit;
    text-decoration: none;
}
ul {
    list-style: none;
    margin: 0;
    padding: 0;
}
.sprite {
    display: none;
}

/* top bars */
.titlebar {
    height: 6px;
    flex: none;
    display: flex;
    justify-content: space-between;
    overflow: hidden;
    background: linear-gradient(90deg, #949494, #bcbcbc);
}
.logo {
    width: 6px;
    background: #f4f4f4;
    border-bottom: 2px solid #d22;
}
.winbtns {
    display: flex;
    gap: 1px;
}
.winbtns button {
    width: 8px;
    height: 5px;
    line-height: 5px;
    background: #d4d0c8;
    border: 1px solid #666;
    border-top: 0;
    font-weight: bold;
}
.menubar {
    height: 12px;
    flex: none;
    display: flex;
    align-items: center;
    gap: 5px;
    padding-left: 8px;
    background: linear-gradient(90deg, #e2dfd8, #fbfaf8);
}
.menubar u {
    text-underline-offset: 1px;
}
.menu-right {
    margin-left: auto;
    padding-right: 2px;
}
.toolbar-row {
    height: 13px;
    flex: none;
    display: flex;
    gap: 1px;
    align-items: center;
    background: linear-gradient(90deg, #e2dfd8, #fbfaf8);
}
.toolbar-row + .toolbar-row {
    height: 12px;
}
.toolbar {
    display: flex;
    align-items: center;
    height: 12px;
    padding-left: 3px;
    border-left: 1px dotted #999;
    background: linear-gradient(#fafaf8, #d6d2ca);
}
.toolbar::after {
    content: "";
    width: 4px;
    height: 12px;
    margin-left: 1px;
    background: linear-gradient(#d6d2ca, #8c8a84 70%, #333 70%, #8c8a84);
}
.tools {
    display: flex;
    align-items: center;
}
.tool {
    width: 11px;
    height: 11px;
    flex: none;
    display: flex;
    align-items: center;
    justify-content: center;
}
.tool:nth-child(odd) {
    width: 10px;
}
.tool.on {
    width: auto;
    min-width: 11px;
    border: 1px solid #3a5590;
    background: #c3cfe4;
}
.tool svg {
    width: 9px;
    height: 9px;
    flex: none;
}
.sep {
    width: 1px;
    height: 9px;
    margin: 0 2px;
    background: #b8b4ac;
}
.drop {
    margin: 0 1px;
    border: 2px solid transparent;
    border-top-color: #222;
    border-bottom: 0;
}
.combo {
    appearance: none;
    height: 10px;
    line-height: 8px;
    padding-left: 1px;
    margin-left: 1px;
    border: 1px solid #b9b5ac;
    background: #fff url("data:image/svg+xml,%3Csvg xmlns='http://www.w3.org/2000/svg' width='6' height='4'%3E%3Cpath d='M1 1H5L3 3Z' fill='%23222'/%3E%3C/svg%3E") no-repeat right 1px center;
}
.combo:disabled {
    background-color: #e2dfd8;
    color: #999;
    opacity: 1;
}
.combo-geo {
    width: 46px;
}
.combo-plane {
    width: 68px;
}
.combo-z {
    width: 34px;
}
.textbtn {
    padding: 0 1px;
}

/* work area */
.work {
    flex: 1;
    min-height: 0;
    display: flex;
}
.rail {
    width: 9px;
    flex: none;
    display: flex;
    flex-direction: column;
    gap: 12px;
    padding-top: 5px;
}
.rail button {
    width: 8px;
    height: 46px;
    display: flex;
    flex-direction: column;
    align-items: center;
    gap: 2px;
    background: #f6f5f2;
    border: 1px solid #8a8780;
    border-left: 0;
    border-radius: 0 5px 7px 0;
}
.rail svg {
    width: 8px;
    height: 9px;
    flex: none;
}
.rail span {
    writing-mode: vertical-rl;
    line-height: 7px;
}
.side {
    width: 155px;
    flex: none;
    display: flex;
    flex-direction: column;
    border-right: 1px solid #f4f2ee;
}
.pane-head {
    height: 9px;
    flex: none;
    display: flex;
    justify-content: space-between;
    padding: 0 2px;
    line-height: 9px;
    background: #808080;
    color: #d8d5ce;
}
.pane-head.active {
    background: #0a246a;
    color: #fff;
}
.pane-head.gap {
    margin-top: 2px;
}
.marks {
    color: #111;
    word-spacing: 3px;
}
.cols {
    display: flex;
    height: 9px;
    flex: none;
    border-bottom: 1px solid #8a8780;
    padding-left: 3px;
}
.cols span:first-child {
    width: 115px;
    border-right: 1px solid #777;
}
.cols span:last-child {
    padding-left: 3px;
}
.tree {
    overflow: hidden;
    background: #fff;
    padding: 1px 0 0 2px;
}
.tree-ops {
    flex: 9 1 0;
}
.tree-solids {
    flex: 10 1 0;
}
.tree li {
    height: 8px;
    display: flex;
    align-items: center;
    white-space: nowrap;
}
.tree svg {
    width: 9px;
    height: 8px;
    flex: none;
    margin-left: 4px;
}
.tree .l1 {
    padding-left: 8px;
}
.tree .l2 {
    padding-left: 20px;
}
.tree .l2::before {
    content: "";
    width: 4px;
    margin-right: -3px;
    border-bottom: 1px dotted #999;
}
.off {
    color: #b8b8b8;
}
.sel {
    background: #d4d0c8;
}
.box {
    width: 5px;
    height: 5px;
    line-height: 3px;
    text-align: center;
    border: 1px solid #8a9ab0;
}
.stub {
    width: 5px;
    border-bottom: 1px dotted #999;
}
.hscroll {
    height: 7px;
    flex: none;
    display: flex;
    justify-content: space-between;
    background: #dedbd4;
    border-bottom: 1px solid #8a8780;
}
.hscroll button {
    width: 8px;
    line-height: 6px;
    border-right: 1px solid #777;
    background: #d4d0c8;
}
.mini {
    height: 11px;
    flex: none;
    padding-left: 2px;
    background: linear-gradient(#f6f5f2, #d6d2ca);
}
.side-tabs {
    height: 12px;
    flex: none;
    display: flex;
    padding-left: 2px;
}
.side-tabs button {
    height: 10px;
    padding: 0 4px 0 6px;
    display: flex;
    align-items: center;
    gap: 1px;
    clip-path: polygon(0 0, 100% 0, 90% 100%, 10% 100%);
}
.side-tabs svg {
    width: 7px;
    height: 7px;
}
.yellow {
    background: #f6e27a;
}
.green {
    background: #b9dca6;
}

/* 3D view */
.stage {
    flex: 1;
    min-width: 0;
    display: flex;
    flex-direction: column;
    padding-left: 2px;
}
.view {
    flex: 1;
    min-height: 0;
    border-top: 1px solid #555;
    background: linear-gradient(#002236, #003e70 28%, #0062bc 62%, #0080ff 94%);
}
.view svg {
    display: block;
    width: 100%;
    height: 100%;
}
.strip {
    height: 12px;
    flex: none;
    display: flex;
    justify-content: space-between;
    align-items: center;
    border-bottom: 2px solid #f6f5f2;
}
.strip .winbtns {
    gap: 0;
}
.strip .winbtns button {
    width: 7px;
}
.strip-tab {
    width: 49px;
    height: 6px;
    background: #808080;
}
.docks {
    height: 41px;
    flex: none;
    display: flex;
    gap: 2px;
}
.dock-coords {
    flex: 42 1 0;
    border-right: 1px solid #f4f2ee;
}
.dock-sim {
    flex: 58 1 0;
}
.coords {
    display: flex;
    gap: 3px;
    padding: 3px 3px 0;
}
.coords label {
    display: flex;
    align-items: center;
    gap: 1px;
}
.coords input, .num {
    width: 32px;
    height: 11px;
    border: 1px solid #f0eee9;
    border-top-color: #777;
    border-left-color: #777;
}
.coord-btns {
    display: flex;
    align-items: center;
    gap: 1px;
}
.coord-btns button {
    width: 32px;
    height: 8px;
    line-height: 6px;
    border: 1px solid #555;
    border-top-color: #fff;
    border-left-color: #fff;
}
.coord-btns .pressed {
    background: #f0eee9;
    border-color: #555 #fff #fff #555;
}
.sim {
    display: flex;
    gap: 4px;
    padding: 3px 2px 0 4px;
}
.sim-main {
    flex: 1;
}
.progress {
    height: 7px;
    background: #fff;
    border: 1px solid #777;
    border-right-color: #eee;
    border-bottom-color: #eee;
}
.sim-speed {
    display: flex;
    align-items: center;
    margin-top: 2px;
}
.stale {
    width: 35px;
    height: 11px;
    display: flex;
    align-items: center;
    gap: 1px;
    padding-left: 3px;
    border: 1px solid #777;
    border-top-color: #fff;
    border-left-color: #fff;
}
.stale i {
    width: 6px;
    height: 6px;
    border: 1px solid #333;
    border-radius: 50%;
}
.sim-speed input[type="range"] {
    flex: 1;
    min-width: 0;
    height: 8px;
    margin: 0 4px 0 7px;
    appearance: none;
    background: linear-gradient(#222, #222) center / 100% 1px no-repeat;
}
.sim-speed input[type="range"]::-webkit-slider-thumb {
    appearance: none;
    width: 3px;
    height: 6px;
    background: #d4d0c8;
    border: 1px solid #666;
}
.spin {
    display: flex;
    flex-direction: column;
}
.spin button {
    width: 8px;
    height: 5px;
    display: flex;
    align-items: center;
    justify-content: center;
    border: 1px solid #888;
}
.up {
    border: 2px solid transparent;
    border-bottom-color: #222;
    border-top: 0;
}
.num {
    width: 12px;
}
.transport {
    display: flex;
    gap: 2px;
}
.transport button {
    width: 9px;
    height: 9px;
}
.transport svg {
    display: block;
    width: 9px;
    height: 9px;
    fill: #0a1f8f;
}
.transport .dim svg {
    fill: #888;
}
.status {
    height: 10px;
    flex: none;
    display: flex;
    justify-content: space-between;
    align-items: center;
    padding: 0 1px;
    background: linear-gradient(90deg, #dbd8d0, #f6f5f3);
}
.flags {
    display: flex;
    color: #888;
}
.flags span {
    line-height: 7px;
    padding: 0 1px;
    border: 1px solid #aaa;
}
.flags .on {
    color: #111;
}

/* dialog window over the workspace */
.dialog {
    position: absolute;
    left: 49px;
    top: 58px;
    width: 218px;
    padding: 1px 3px 3px;
    background: #d4d0c8;
    border: 1px solid #f4f2ee;
    border-right-color: #404040;
    border-bottom-color: #404040;
}
.dlg-title {
    height: 9px;
    margin: 0 -2px;
    padding: 0 1px;
    display: flex;
    align-items: center;
    justify-content: space-between;
    background: linear-gradient(90deg, #0a246a, #a6caf0);
    color: #fff;
    font-weight: bold;
}
.dlg-title button {
    width: 8px;
    height: 7px;
    line-height: 5px;
    color: #111;
    background: #d4d0c8;
    border: 1px solid #777;
    border-top-color: #fff;
    border-left-color: #fff;
}
.tabs {
    display: flex;
    align-items: flex-end;
    margin-top: 2px;
}
.tabs button {
    height: 10px;
    padding: 0 1px;
    min-width: 20px;
    border-top: 1px solid #fff;
    border-right: 1px solid #444;
}
.tabs .current {
    height: 12px;
    padding: 0 2px 1px;
    border-left: 1px solid #fff;
    margin-bottom: -1px;
    background: #d4d0c8;
}
.page {
    height: 259px;
    padding: 2px 4px 0 2px;
    border: 1px solid #fff;
    border-right-color: #404040;
    border-bottom-color: #404040;
}
.marked {
    width: 174px;
    height: 16px;
    display: flex;
    align-items: center;
    padding: 0 2px;
    border: 2px solid #c41f2a;
    white-space: nowrap;
}
.marked > label:first-child {
    width: 59px;
    flex: none;
}
.page input[type="text"] {
    width: 37px;
    height: 10px;
    flex: none;
    padding-left: 1px;
    background: #fff;
    border: 1px solid #e8e6e0;
    border-top-color: #444;
    border-left-color: #444;
}
.check {
    display: flex;
    align-items: center;
    gap: 2px;
}
.marked .check {
    margin-left: 3px;
}
.focus {
    line-height: 7px;
    outline: 1px dotted #555;
}
.page input[type="checkbox"], .page input[type="radio"] {
    appearance: none;
    width: 6px;
    height: 6px;
    flex: none;
    background: #fff;
    border: 1px solid #666;
    border-right-color: #ddd;
    border-bottom-color: #ddd;
}
.page input[type="checkbox"]:checked {
    background: #fff url("data:image/svg+xml,%3Csvg xmlns='http://www.w3.org/2000/svg' viewBox='0 0 6 6'%3E%3Cpath d='M1.2 2.8L2.5 4.3L5 1.2' fill='none' stroke='%23000' stroke-width='1.2'/%3E%3C/svg%3E") center / 6px 6px no-repeat;
}
.page input[type="radio"] {
    border-radius: 50%;
}
.page input[type="radio"]:checked {
    background: radial-gradient(#000 1px, #fff 2px);
}
.heading {
    display: flex;
    align-items: center;
    gap: 6px;
    padding-left: 4px;
}
.heading::after {
    content: "";
    flex: 1;
    height: 2px;
    border-top: 1px solid #999;
    border-bottom: 1px solid #fff;
}
.row {
    display: flex;
    gap: 7px;
    padding: 3px 0 2px 3px;
}
fieldset {
    width: 98px;
    margin: 0;
    padding: 0 6px 3px;
    border: 1px solid #999;
}
legend {
    padding: 0 1px;
    margin-left: -3px;
    line-height: 6px;
}
fieldset label {
    display: flex;
    align-items: center;
    gap: 3px;
}
.opts {
    flex: 1;
}
.field {
    display: flex;
    align-items: center;
    justify-content: space-between;
}
.opts .check {
    margin-top: 3px;
}
.dlg-btns {
    display: flex;
    justify-content: flex-end;
    gap: 2px;
    margin-top: 2px;
}
.dlg-btns button {
    width: 37px;
    height: 12px;
    border: 1px solid #555;
    border-top-color: #fff;
    border-left-color: #fff;
}
.dlg-btns .default {
    border-color: #111;
}
```
